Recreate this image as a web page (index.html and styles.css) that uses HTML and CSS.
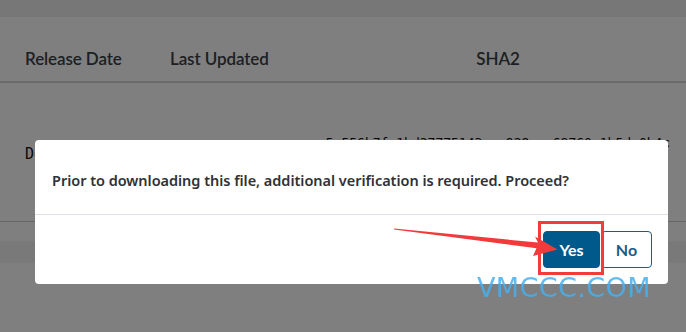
FILE: index.html
```html
<!DOCTYPE html>
<html>
<head>
  <title>Downloads</title>
  <meta charset="UTF-8">
  <link rel="stylesheet" href="styles.css">
</head>
<body>
  <div class="page">
    <div class="top-band"></div>
    <div class="table">
      <div class="table-head">
        <div class="col col-date">Release Date</div>
        <div class="col col-updated">Last Updated</div>
        <div class="col col-sha">SHA2</div>
      </div>
      <div class="table-row">
        <div class="col col-date cell-date">Dec 18, 2023</div>
        <div class="col col-updated"></div>
        <div class="col col-sha cell-sha">5e556b7fc1bd27775143ccc929ccc68760e1b5dc0b4c<br>8d1f3a0e6b2c7a94d5e0f1b2c3</div>
      </div>
      <div class="table-gap"></div>
      <div class="table-band"></div>
    </div>
  </div>

  <div class="overlay">
    <div class="modal">
      <div class="modal-body">
        <p>Prior to downloading this file, additional verification is required. Proceed?</p>
      </div>
      <div class="modal-footer">
        <button class="btn btn-primary">Yes</button>
        <button class="btn btn-outline">No</button>
      </div>
    </div>
  </div>

  <!-- annotation on top of the screenshot -->
  <svg class="arrow" width="686" height="332" viewBox="0 0 686 332">
    <polygon points="394,228.4 538,242.6 535,236.5 557.5,249.5 533,256 536.5,248.2 394,229.6" fill="#f23a3a" />
  </svg>
  <div class="highlight"></div>
  <div class="watermark">vmccc.com</div>
</body>
</html>
```

FILE: styles.css
```css
body {
  margin: 0;
  width: 686px;
  height: 332px;
  overflow: hidden;
  background-color: #ffffff;
  font-family: Lato, "Noto Sans", sans-serif;
  color: #3b3f45;
}

.top-band {
  height: 17px;
  background-color: #eeeeee;
}

.table-head,
.table-row {
  display: grid;
  grid-template-columns: 145px 140px 1fr;
  padding-left: 25px;
}

.table-head {
  align-items: end;
  border-bottom: 2px solid #d6d6d6;
  box-sizing: border-box;
  height: 66px;
}

.table-head .col {
  font-size: 17px;
  font-weight: 600;
  line-height: 20px;
  padding-bottom: 12px;
  letter-spacing: -0.1px;
}

.col-sha {
  text-align: center;
}

.table-row {
  height: 138px;
  border-bottom: 1px solid #cfcfcf;
}

.cell-date {
  padding-top: 62px;
  font-family: "DejaVu Sans Mono", monospace;
  font-size: 15px;
  color: #111111;
}

.cell-sha {
  padding-top: 51px;
  font-family: "DejaVu Sans Mono", monospace;
  font-size: 13px;
  line-height: 18px;
  color: #111111;
}

.table-gap {
  height: 19px;
}

.table-band {
  height: 22px;
  background-color: #f2f2f2;
}

.overlay {
  position: fixed;
  top: 0;
  left: 0;
  right: 0;
  bottom: 0;
  background-color: rgba(0, 0, 0, 0.5);
}

.modal {
  margin: 140px 0 0 35px;
  width: 633px;
  height: 144px;
  background-color: #ffffff;
  border-radius: 4px;
  display: flex;
  flex-direction: column;
}

.modal-body {
  height: 74px;
  padding: 0 17px;
  border-bottom: 1px solid #dde0e4;
  display: flex;
  align-items: center;
}

.modal-body p {
  margin: 6px 0 0 0;
  font-family: "Noto Sans", sans-serif;
  font-size: 14.5px;
  font-weight: 600;
  letter-spacing: -0.03px;
  color: #2f3237;
}

.modal-footer {
  display: flex;
  justify-content: flex-end;
  gap: 1px;
  padding: 16px 16px 0 0;
}

.btn {
  height: 37px;
  border-radius: 4px;
  font-family: Lato, sans-serif;
  font-size: 16px;
  font-weight: 700;
  cursor: pointer;
}

.btn-primary {
  width: 57px;
  background-color: #00598b;
  border: 1px solid #00598b;
  color: #ffffff;
}

.btn-outline {
  width: 51px;
  background-color: #ffffff;
  border: 1px solid #1a5d8c;
  color: #1a5d8c;
}

.arrow {
  position: absolute;
  top: 0;
  left: 0;
}

.highlight {
  position: absolute;
  left: 538px;
  top: 221px;
  width: 66px;
  height: 54px;
  box-sizing: border-box;
  border: 3px solid #f23b3b;
}

.watermark {
  position: absolute;
  left: 477px;
  top: 272px;
  font-family: "DejaVu Sans", sans-serif;
  font-size: 27px;
  line-height: 32px;
  text-transform: uppercase;
  letter-spacing: 0.4px;
  color: rgba(70, 175, 238, 0.85);
}
```
